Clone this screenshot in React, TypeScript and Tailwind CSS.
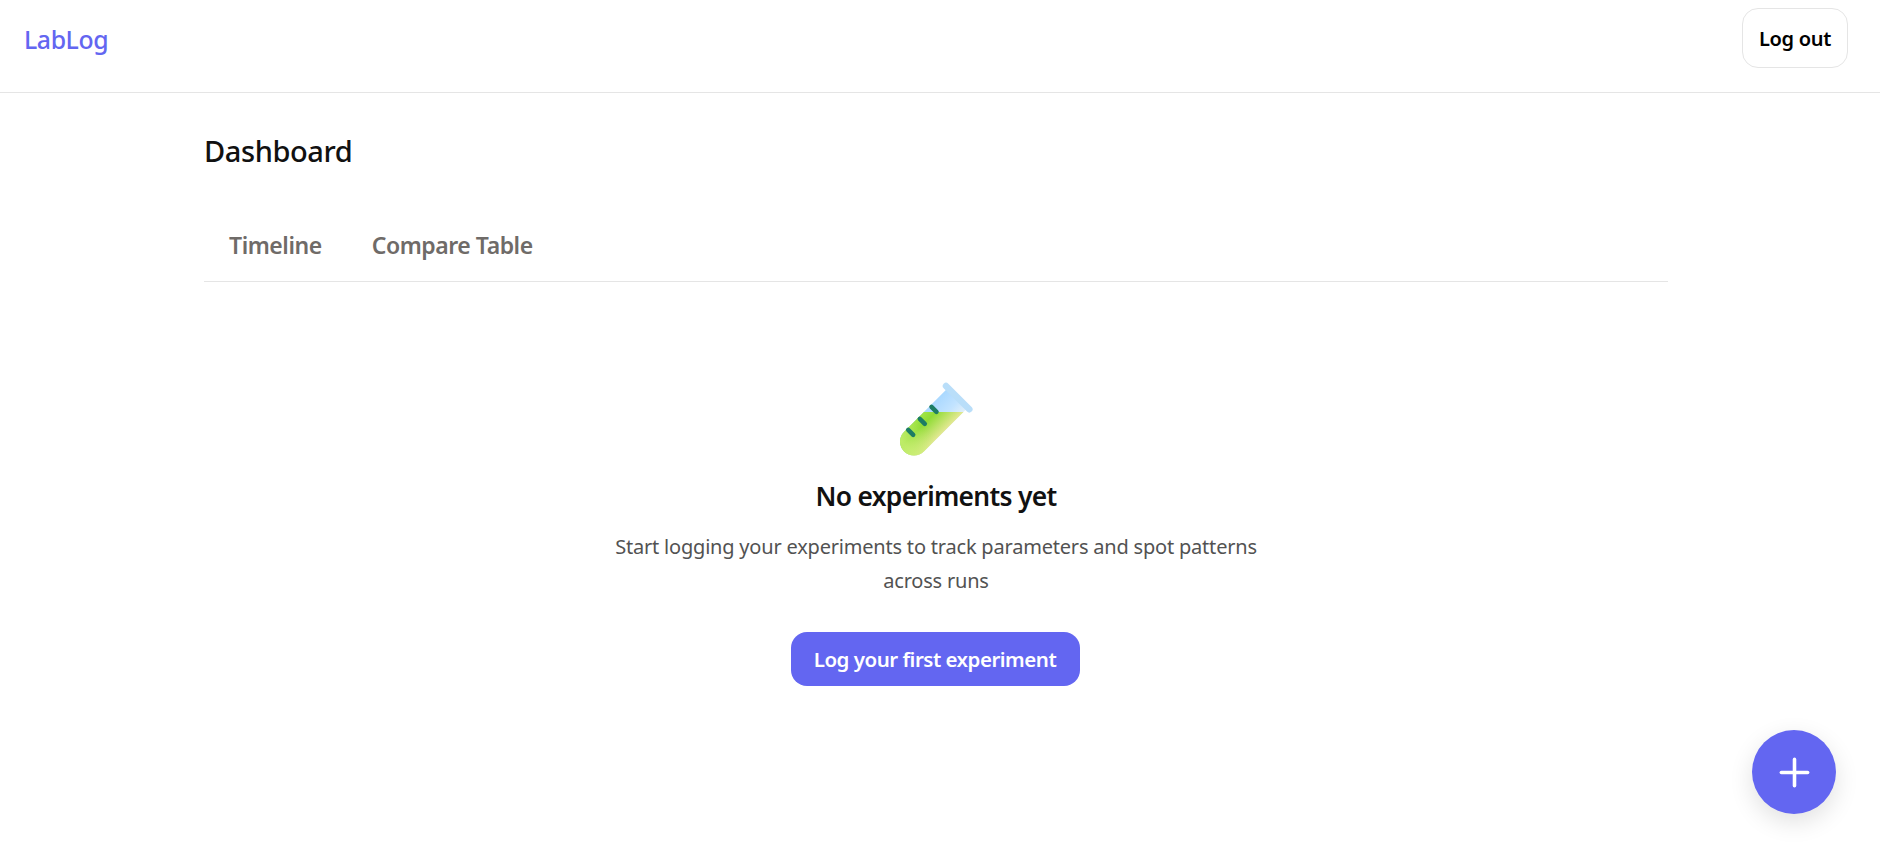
import { Plus } from "lucide-react";

function TestTube() {
  const body = "M49.4 10.4L69.2 30.2L26.9 72.5A14 14 0 0 1 7.1 52.7Z";
  return (
    <svg width="80" height="80" viewBox="-1 0 80 80" className="block">
      <defs>
        <linearGradient id="glass" gradientUnits="userSpaceOnUse" x1="47" y1="12" x2="67" y2="32">
          <stop offset="0" stopColor="#a9d8ff" />
          <stop offset="0.6" stopColor="#c2e3ff" />
          <stop offset="1" stopColor="#e0effa" />
        </linearGradient>
        <linearGradient id="liquid" gradientUnits="userSpaceOnUse" x1="19" y1="39" x2="39" y2="59">
          <stop offset="0" stopColor="#a4e64a" />
          <stop offset="0.35" stopColor="#90dc36" />
          <stop offset="1" stopColor="#dfe88e" />
        </linearGradient>
        <linearGradient id="tip" gradientUnits="userSpaceOnUse" x1="28" y1="50" x2="10" y2="68">
          <stop offset="0" stopColor="#c8ef72" stopOpacity="0" />
          <stop offset="1" stopColor="#c8ef72" stopOpacity="0.8" />
        </linearGradient>
        <clipPath id="tube">
          <path d={body} />
        </clipPath>
      </defs>
      <path d={body} fill="url(#glass)" />
      <g clipPath="url(#tube)">
        <rect x="0" y="33" width="80" height="47" fill="url(#liquid)" />
        <rect x="0" y="33" width="80" height="47" fill="url(#tip)" />
      </g>
      <path d="M49 7L72.3 30.3" stroke="#b9def9" strokeWidth="6.5" strokeLinecap="round" />
      <g stroke="#1c7d64" strokeWidth="4.5" strokeLinecap="round">
        <path d="M34.5 27.8L39.5 32.8" />
        <path d="M22.8 39.8L27.8 44.8" />
        <path d="M11.2 50.8L16.2 55.8" />
      </g>
    </svg>
  );
}

export default function App() {
  return (
    <div className="min-h-screen bg-white font-['Noto_Sans','Open_Sans',sans-serif] text-[#111111]">
      <header className="flex h-[93px] items-center justify-between border-b border-[#e5e5e5] pl-6 pr-8 pb-[17px]">
        <span className="pt-[5px] text-[24.8px] font-medium tracking-[-0.4px] text-[#6366f1]">LabLog</span>
        <button className="h-[60px] w-[106px] rounded-2xl border border-[#e5e5e5] bg-white pt-[3px] text-[20px] font-semibold tracking-[-0.3px] text-black">
          Log out
        </button>
      </header>

      <main className="ml-[204px] w-[1464px]">
        <h1 className="pt-[39px] text-[29px] leading-[38px] font-medium tracking-[-0.4px]">Dashboard</h1>

        <nav className="mt-[37px] flex h-[75px] items-center gap-[50px] border-b border-[#e5e5e5] px-[25px] pt-[3px] text-[23px] font-semibold tracking-[-0.45px] text-[#6f6b68]">
          <span>Timeline</span>
          <span>Compare Table</span>
        </nav>

        <section className="flex flex-col items-center pt-[97px] text-center">
          <TestTube />
          <h2 className="mt-[19px] text-[26.4px] leading-[36px] font-semibold tracking-[-0.7px]">No experiments yet</h2>
          <p className="mt-[16px] w-[660px] text-[20px] leading-[34px] tracking-[-0.2px] text-[#525252]">
            Start logging your experiments to track parameters and spot patterns across runs
          </p>
          <button className="mt-[34px] mr-[2px] h-[54px] w-[289px] rounded-2xl bg-[#6366f1] text-[20.5px] font-semibold tracking-[-0.5px] text-white">
            Log your first experiment
          </button>
        </section>
      </main>

      <button className="fixed right-[44px] bottom-[31px] flex h-[84px] w-[84px] items-center justify-center rounded-full bg-[#6366f1] text-white shadow-[0_8px_24px_rgba(0,0,0,0.12)]">
        <Plus size={45} strokeWidth={1.9} />
      </button>
    </div>
  );
}
